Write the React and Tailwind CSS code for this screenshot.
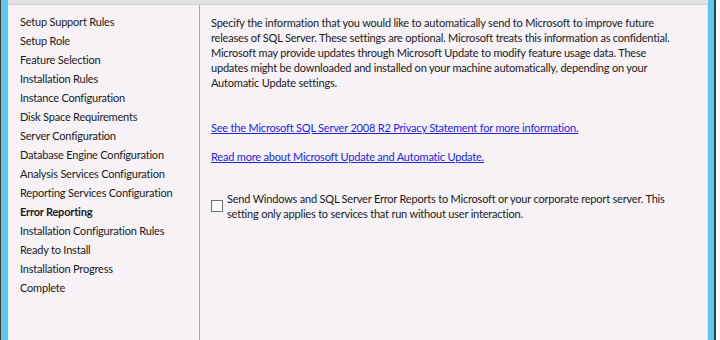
export default function App() {
  const steps = [
    "Setup Support Rules",
    "Setup Role",
    "Feature Selection",
    "Installation Rules",
    "Instance Configuration",
    "Disk Space Requirements",
    "Server Configuration",
    "Database Engine Configuration",
    "Analysis Services Configuration",
    "Reporting Services Configuration",
    "Error Reporting",
    "Installation Configuration Rules",
    "Ready to Install",
    "Installation Progress",
    "Complete",
  ];
  const font = { fontFamily: 'Lato, "Noto Sans", sans-serif' };
  return (
    <div className="w-[720px] h-[340px] flex bg-white overflow-hidden text-[11px] tracking-[-0.2px] text-[#1a1a1a]" style={font}>
      <div className="w-[1px] shrink-0 bg-[#3a3a3a]" />
      <div className="w-[7px] shrink-0 bg-[#5ac8f0]" />
      <div className="flex-1 min-w-0 flex flex-col">
        <div className="h-[5px] shrink-0 bg-[#e2e2e2] border-b border-[#d2d2d2]" />
        <div className="flex-1 min-h-0 flex bg-[#f6f2f6]">
          <div className="w-[192px] shrink-0 border-r border-[#a8a8a8] pt-[7px] pl-[12px] flex flex-col">
            {steps.map((s) => (
              <div
                key={s}
                className={"h-[19px] leading-[19px] whitespace-nowrap " + (s === "Error Reporting" ? "font-bold" : "")}
              >
                {s}
              </div>
            ))}
          </div>
          <div className="flex-1 min-w-0 pl-[11px] pt-[10px] flex flex-col">
            <p className="leading-[15px] whitespace-nowrap">
              Specify the information that you would like to automatically send to Microsoft to improve future
              <br />
              releases of SQL Server. These settings are optional. Microsoft treats this information as confidential.
              <br />
              Microsoft may provide updates through Microsoft Update to modify feature usage data. These
              <br />
              updates might be downloaded and installed on your machine automatically, depending on your
              <br />
              Automatic Update settings.
            </p>
            <a className="mt-[30px] leading-[15px] text-[#2323e8] underline whitespace-nowrap w-fit" href="#">
              See the Microsoft SQL Server 2008 R2 Privacy Statement for more information.
            </a>
            <a className="mt-[14px] leading-[15px] text-[#2323e8] underline whitespace-nowrap w-fit" href="#">
              Read more about Microsoft Update and Automatic Update.
            </a>
            <div className="mt-[27px] flex items-center gap-[4px]">
              <div className="w-[12px] h-[12px] border border-[#707070] bg-white shrink-0" />
              <p className="leading-[15px] whitespace-nowrap">
                Send Windows and SQL Server Error Reports to Microsoft or your corporate report server. This
                <br />
                setting only applies to services that run without user interaction.
              </p>
            </div>
          </div>
        </div>
      </div>
      <div className="w-[1px] shrink-0 bg-[#e0e0e0]" />
      <div className="w-[6px] shrink-0 bg-[#5ac8f0]" />
      <div className="w-[2px] shrink-0 bg-[#3a3a3a]" />
      <div className="w-[4px] shrink-0 bg-white" />
    </div>
  );
}
